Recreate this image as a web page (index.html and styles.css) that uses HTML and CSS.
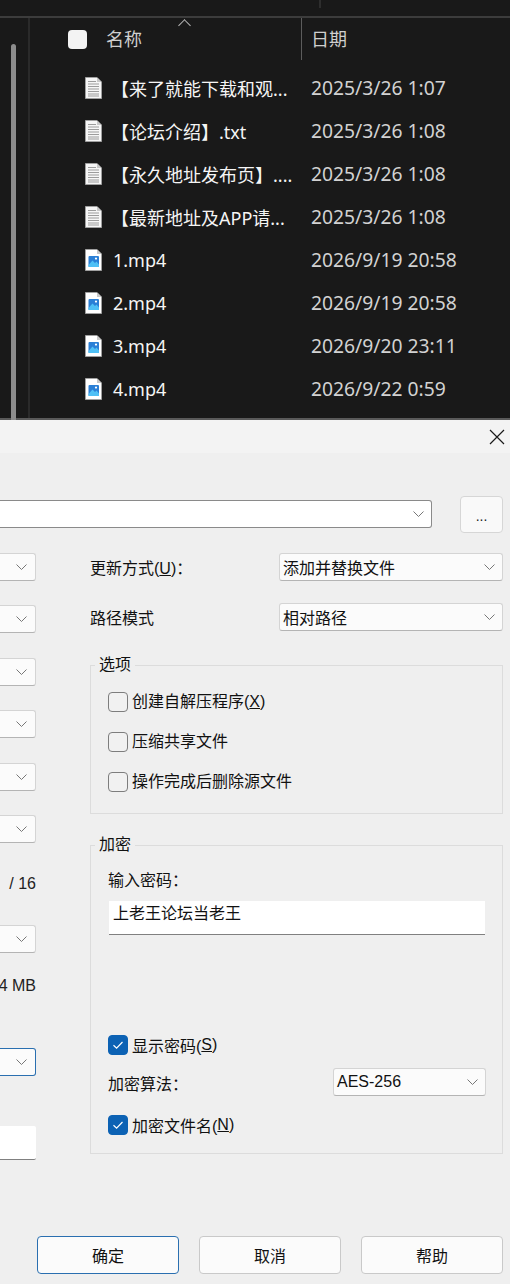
FILE: index.html
```html
<!DOCTYPE html>
<html lang="zh-CN">
<head>
  <meta charset="UTF-8" />
  <title>压缩文件名和参数</title>
  <link rel="stylesheet" href="styles.css">
</head>
<body>

<svg class="defs" width="0" height="0">
  <symbol id="doc" viewBox="0 0 17 22">
    <path d="M.5.5H12L16.5 5V21.5H.5Z" fill="#f6f6f6" stroke="#a0a0a0"/>
    <path d="M12 .5V5H16.5Z" fill="#c8c8c8"/>
    <path d="M3 4.5H11M3 7H14M3 9.5H14M3 12H14M3 14.5H14M3 17H14M3 19H14" stroke="#9c9c9c" stroke-width="1"/>
  </symbol>
  <symbol id="video" viewBox="0 0 17 22">
    <path d="M.5.5H12L16.5 5V21.5H.5Z" fill="#fff" stroke="#a0a0a0"/>
    <path d="M12 .5V5H16.5Z" fill="#c8c8c8"/>
    <rect x="3.5" y="7" width="10.5" height="11" rx="1" fill="#2a7fd6"/>
    <path d="M3.5 16L7.5 11.5L10 14L11.5 12.5L14 15.5V18H3.5Z" fill="#4fc0f5"/>
    <circle cx="11" cy="9.6" r="1.1" fill="#fff"/>
  </symbol>
  <symbol id="chevron" viewBox="0 0 11 6">
    <path d="M.5.5L5.5 5.5L10.5.5" fill="none" stroke="#777" stroke-width="1"/>
  </symbol>
  <symbol id="tick" viewBox="0 0 20 20">
    <path d="M5.5 10.2L8.6 13.2L14.5 7" fill="none" stroke="#fff" stroke-width="1.2"/>
  </symbol>
</svg>

<div class="explorer">
  <div class="toolbar"><span class="toolbar-sep"></span></div>
  <div class="explorer-body">
    <div class="nav"><div class="scrollbar"></div></div>
    <div class="files">
      <div class="files-header">
        <span class="select-all"></span>
        <span class="col-name">名称</span>
        <span class="sort-caret"></span>
        <span class="col-date">日期</span>
      </div>
      <div class="file-row"><svg class="file-icon"><use href="#doc"/></svg><span class="file-name">【来了就能下载和观...</span><span class="file-date">2025/3/26 1:07</span></div>
      <div class="file-row"><svg class="file-icon"><use href="#doc"/></svg><span class="file-name">【论坛介绍】.txt</span><span class="file-date">2025/3/26 1:08</span></div>
      <div class="file-row"><svg class="file-icon"><use href="#doc"/></svg><span class="file-name">【永久地址发布页】....</span><span class="file-date">2025/3/26 1:08</span></div>
      <div class="file-row"><svg class="file-icon"><use href="#doc"/></svg><span class="file-name">【最新地址及APP请...</span><span class="file-date">2025/3/26 1:08</span></div>
      <div class="file-row"><svg class="file-icon"><use href="#video"/></svg><span class="file-name file-name-video">1.mp4</span><span class="file-date">2026/9/19 20:58</span></div>
      <div class="file-row"><svg class="file-icon"><use href="#video"/></svg><span class="file-name file-name-video">2.mp4</span><span class="file-date">2026/9/19 20:58</span></div>
      <div class="file-row"><svg class="file-icon"><use href="#video"/></svg><span class="file-name file-name-video">3.mp4</span><span class="file-date">2026/9/20 23:11</span></div>
      <div class="file-row"><svg class="file-icon"><use href="#video"/></svg><span class="file-name file-name-video">4.mp4</span><span class="file-date">2026/9/22 0:59</span></div>
    </div>
  </div>
</div>

<div class="dialog">
  <div class="titlebar">
    <svg class="close" viewBox="0 0 16 16"><path d="M1 1L15 15M15 1L1 15" stroke="#1a1a1a" stroke-width="1.2"/></svg>
  </div>

  <div class="path-row">
    <div class="combo combo-path"><svg class="chevron"><use href="#chevron"/></svg></div>
    <button class="browse">...</button>
  </div>

  <div class="columns">
    <div class="left-col">
      <div class="combo combo-cut"><svg class="chevron"><use href="#chevron"/></svg></div>
      <div class="combo combo-cut step"><svg class="chevron"><use href="#chevron"/></svg></div>
      <div class="combo combo-cut step"><svg class="chevron"><use href="#chevron"/></svg></div>
      <div class="combo combo-cut step"><svg class="chevron"><use href="#chevron"/></svg></div>
      <div class="combo combo-cut step"><svg class="chevron"><use href="#chevron"/></svg></div>
      <div class="combo combo-cut step"><svg class="chevron"><use href="#chevron"/></svg></div>
      <div class="left-text threads">/ 16</div>
      <div class="combo combo-cut after-threads"><svg class="chevron"><use href="#chevron"/></svg></div>
      <div class="left-text memory">4 MB</div>
      <div class="combo combo-cut combo-focus after-memory"><svg class="chevron"><use href="#chevron"/></svg></div>
      <div class="left-input"></div>
    </div>

    <div class="right-col">
      <div class="form-row">
        <label class="form-label">更新方式(<u>U</u>)：</label>
        <div class="combo combo-wide">添加并替换文件<svg class="chevron"><use href="#chevron"/></svg></div>
      </div>
      <div class="form-row form-row-next">
        <label class="form-label">路径模式</label>
        <div class="combo combo-wide">相对路径<svg class="chevron"><use href="#chevron"/></svg></div>
      </div>

      <fieldset class="group group-options">
        <legend>选项</legend>
        <div class="check-row"><span class="check"></span>创建自解压程序(<u>X</u>)</div>
        <div class="check-row"><span class="check"></span>压缩共享文件</div>
        <div class="check-row"><span class="check"></span>操作完成后删除源文件</div>
      </fieldset>

      <fieldset class="group group-crypt">
        <legend>加密</legend>
        <div class="field-title">输入密码：</div>
        <div class="password">上老王论坛当老王</div>
        <div class="check-row check-show"><span class="check check-on"><svg><use href="#tick"/></svg></span>显示密码(<u>S</u>)</div>
        <div class="algo-row">
          <span class="algo-label">加密算法：</span>
          <div class="combo combo-algo">AES-256<svg class="chevron"><use href="#chevron"/></svg></div>
        </div>
        <div class="check-row check-names"><span class="check check-on"><svg><use href="#tick"/></svg></span>加密文件名(<u>N</u>)</div>
      </fieldset>
    </div>
  </div>

  <div class="footer">
    <button class="btn btn-primary">确定</button>
    <button class="btn">取消</button>
    <button class="btn">帮助</button>
  </div>
</div>

</body>
</html>
```

FILE: styles.css
```css
body {
  margin: 0;
  width: 510px;
  height: 1284px;
  overflow: hidden;
  font-family: "Liberation Sans", "Noto Sans CJK SC", sans-serif;
  font-size: 16px;
  color: #111;
}

.defs {
  display: block;
  height: 0;
}

/* explorer window */
.explorer {
  height: 420px;
  background: #191919;
  color: #f5f5f5;
  font-family: "Noto Sans", "Noto Sans CJK SC", sans-serif;
  overflow: hidden;
}

.toolbar {
  height: 16px;
  border-bottom: 2px solid #3c3c3c;
  display: flex;
}

.toolbar-sep {
  width: 2px;
  height: 8px;
  margin-left: 319px;
  background: #2e2e2e;
}

.explorer-body {
  display: flex;
  height: 400px;
  border-bottom: 2px solid #5a5a5a;
}

.nav {
  width: 30px;
  border-right: 2px solid #2a2a2a;
  padding-left: 11px;
  box-sizing: border-box;
  flex: none;
}

.scrollbar {
  width: 5px;
  height: 376px;
  margin-top: 26px;
  background: #8c8c8c;
  border-radius: 3px 3px 0 0;
}

.files {
  flex: 1;
}

.files-header {
  display: flex;
  align-items: center;
  height: 42px;
  margin-bottom: 6px;
  padding-left: 38px;
  position: relative;
  font-size: 18px;
  color: #cfcfcf;
}

.select-all {
  width: 19px;
  height: 19px;
  background: #f3f3f3;
  border-radius: 4px;
  flex: none;
}

.col-name {
  width: 195px;
  height: 42px;
  line-height: 42px;
  margin-left: 19px;
  border-right: 1px solid #5c5c5c;
  flex: none;
}

.col-date {
  margin: -2px 0 0 9px;
}

.sort-caret {
  position: absolute;
  left: 150px;
  top: 3px;
  width: 8px;
  height: 8px;
  border-top: 1px solid #b8b8b8;
  border-left: 1px solid #b8b8b8;
  transform: rotate(45deg);
}

.file-row {
  display: flex;
  align-items: center;
  height: 43px;
  padding-left: 55px;
}

.file-icon {
  width: 17px;
  height: 22px;
  flex: none;
}

.file-name {
  width: 209px;
  box-sizing: border-box;
  padding-left: 9px;
  font-size: 18px;
  white-space: nowrap;
  flex: none;
}

.file-name-video {
  padding-left: 11px;
}

.file-date {
  font-size: 19.3px;
  color: #d2d2d2;
  white-space: nowrap;
}

/* compress dialog */
.dialog {
  height: 864px;
  background: #efefef;
  display: flex;
  flex-direction: column;
}

.titlebar {
  height: 33px;
  flex: none;
  background: #f3f3f3;
  display: flex;
  justify-content: flex-end;
  align-items: center;
  padding-right: 5px;
}

.close {
  width: 16px;
  height: 16px;
}

.path-row {
  display: flex;
  align-items: center;
  margin-top: 43px;
  height: 37px;
}

.combo {
  height: 28px;
  box-sizing: border-box;
  display: flex;
  align-items: center;
  justify-content: space-between;
  padding: 0 7px 0 3px;
  background: #fbfbfb;
  border: 1px solid #d4d4d4;
  border-bottom-color: #b4b4b4;
  border-radius: 3px;
  white-space: nowrap;
  flex: none;
}

.chevron {
  width: 11px;
  height: 6px;
  margin-left: auto;
  flex: none;
}

.combo-path {
  width: 432px;
  margin-bottom: 2px;
  background: #fff;
  border-color: #8a8a8a;
  border-left: none;
  border-radius: 0 3px 3px 0;
}

.browse {
  width: 43px;
  height: 37px;
  margin-left: 28px;
  padding: 3px 0 0;
  background: #f9f9f9;
  border: 1px solid #d6d6d6;
  border-radius: 4px;
  font: inherit;
  font-size: 14px;
  color: #222;
}

.columns {
  display: flex;
  margin-top: 20px;
}

.left-col {
  width: 36px;
  flex: none;
}

.combo-cut {
  width: 36px;
  padding-right: 8px;
  border-left: none;
  border-radius: 0 3px 3px 0;
}

.step {
  margin-top: 24.4px;
}

.combo-focus {
  border-color: #2a6fb0;
}

.left-text {
  height: 20px;
  line-height: 20px;
  white-space: nowrap;
  display: flex;
  justify-content: flex-end;
  color: #222;
}

.threads {
  margin-top: 31px;
}

.after-threads {
  margin-top: 31px;
}

.memory {
  margin-top: 23px;
}

.after-memory {
  margin-top: 52px;
}

.left-input {
  height: 34px;
  margin-top: 50px;
  box-sizing: border-box;
  background: #fff;
  border-bottom: 1px solid #808080;
  border-radius: 0 2px 2px 0;
}

.right-col {
  width: 413px;
  margin-left: 54px;
  flex: none;
}

.form-row {
  display: flex;
  align-items: center;
}

.form-row-next {
  margin-top: 22px;
}

.form-label {
  width: 189px;
  flex: none;
}

.combo-wide {
  width: 224px;
}

.group {
  margin: 0;
  padding: 0;
  border: 1px solid #dcdcdc;
  box-sizing: border-box;
  min-width: 0;
}

.group legend {
  padding: 0 4px;
  margin-left: -13px;
  height: 20px;
  line-height: 20px;
  font-size: 16px;
}

.group-options {
  height: 159px;
  margin-top: 24px;
  padding: 17px 0 0 17px;
}

.group-crypt {
  height: 319px;
  margin-top: 21px;
  padding: 15px 0 0 17px;
}

.check-row {
  display: flex;
  align-items: center;
  height: 20px;
  margin-bottom: 20px;
  white-space: nowrap;
}

.group-options .check-row {
  align-items: flex-start;
  line-height: 19px;
}

.check {
  width: 20px;
  height: 20px;
  box-sizing: border-box;
  margin-right: 4px;
  border: 1.5px solid #7d7d7d;
  border-radius: 4px;
  background: #f1f1f1;
  flex: none;
}

.check-on {
  background: #0c62b4;
  border-color: #0c62b4;
}

.check-on svg {
  display: block;
  width: 20px;
  height: 20px;
  margin: -1.5px;
}

.field-title {
  height: 20px;
  line-height: 22px;
}

.password {
  width: 376px;
  height: 34px;
  margin: 11px 0 0 1px;
  padding: 2px 0 0 4px;
  box-sizing: border-box;
  background: #fff;
  border-bottom: 1px solid #808080;
  line-height: 22px;
}

.check-show {
  margin: 100px 0 0;
}

.algo-row {
  display: flex;
  align-items: center;
  justify-content: space-between;
  width: 378px;
  margin-top: 13px;
}

.algo-label {
  padding-top: 2px;
}

.combo-algo {
  width: 153px;
}

.check-names {
  margin: 19px 0 0;
}

.footer {
  display: flex;
  gap: 20px;
  margin-top: auto;
  padding: 0 0 10px 37px;
}

.btn {
  width: 142px;
  height: 38px;
  padding: 0;
  background: #fbfbfb;
  border: 1px solid #c9c9c9;
  border-radius: 4px;
  font: inherit;
  color: #111;
}

.btn-primary {
  border: 1.5px solid #2a6fb0;
}
```
